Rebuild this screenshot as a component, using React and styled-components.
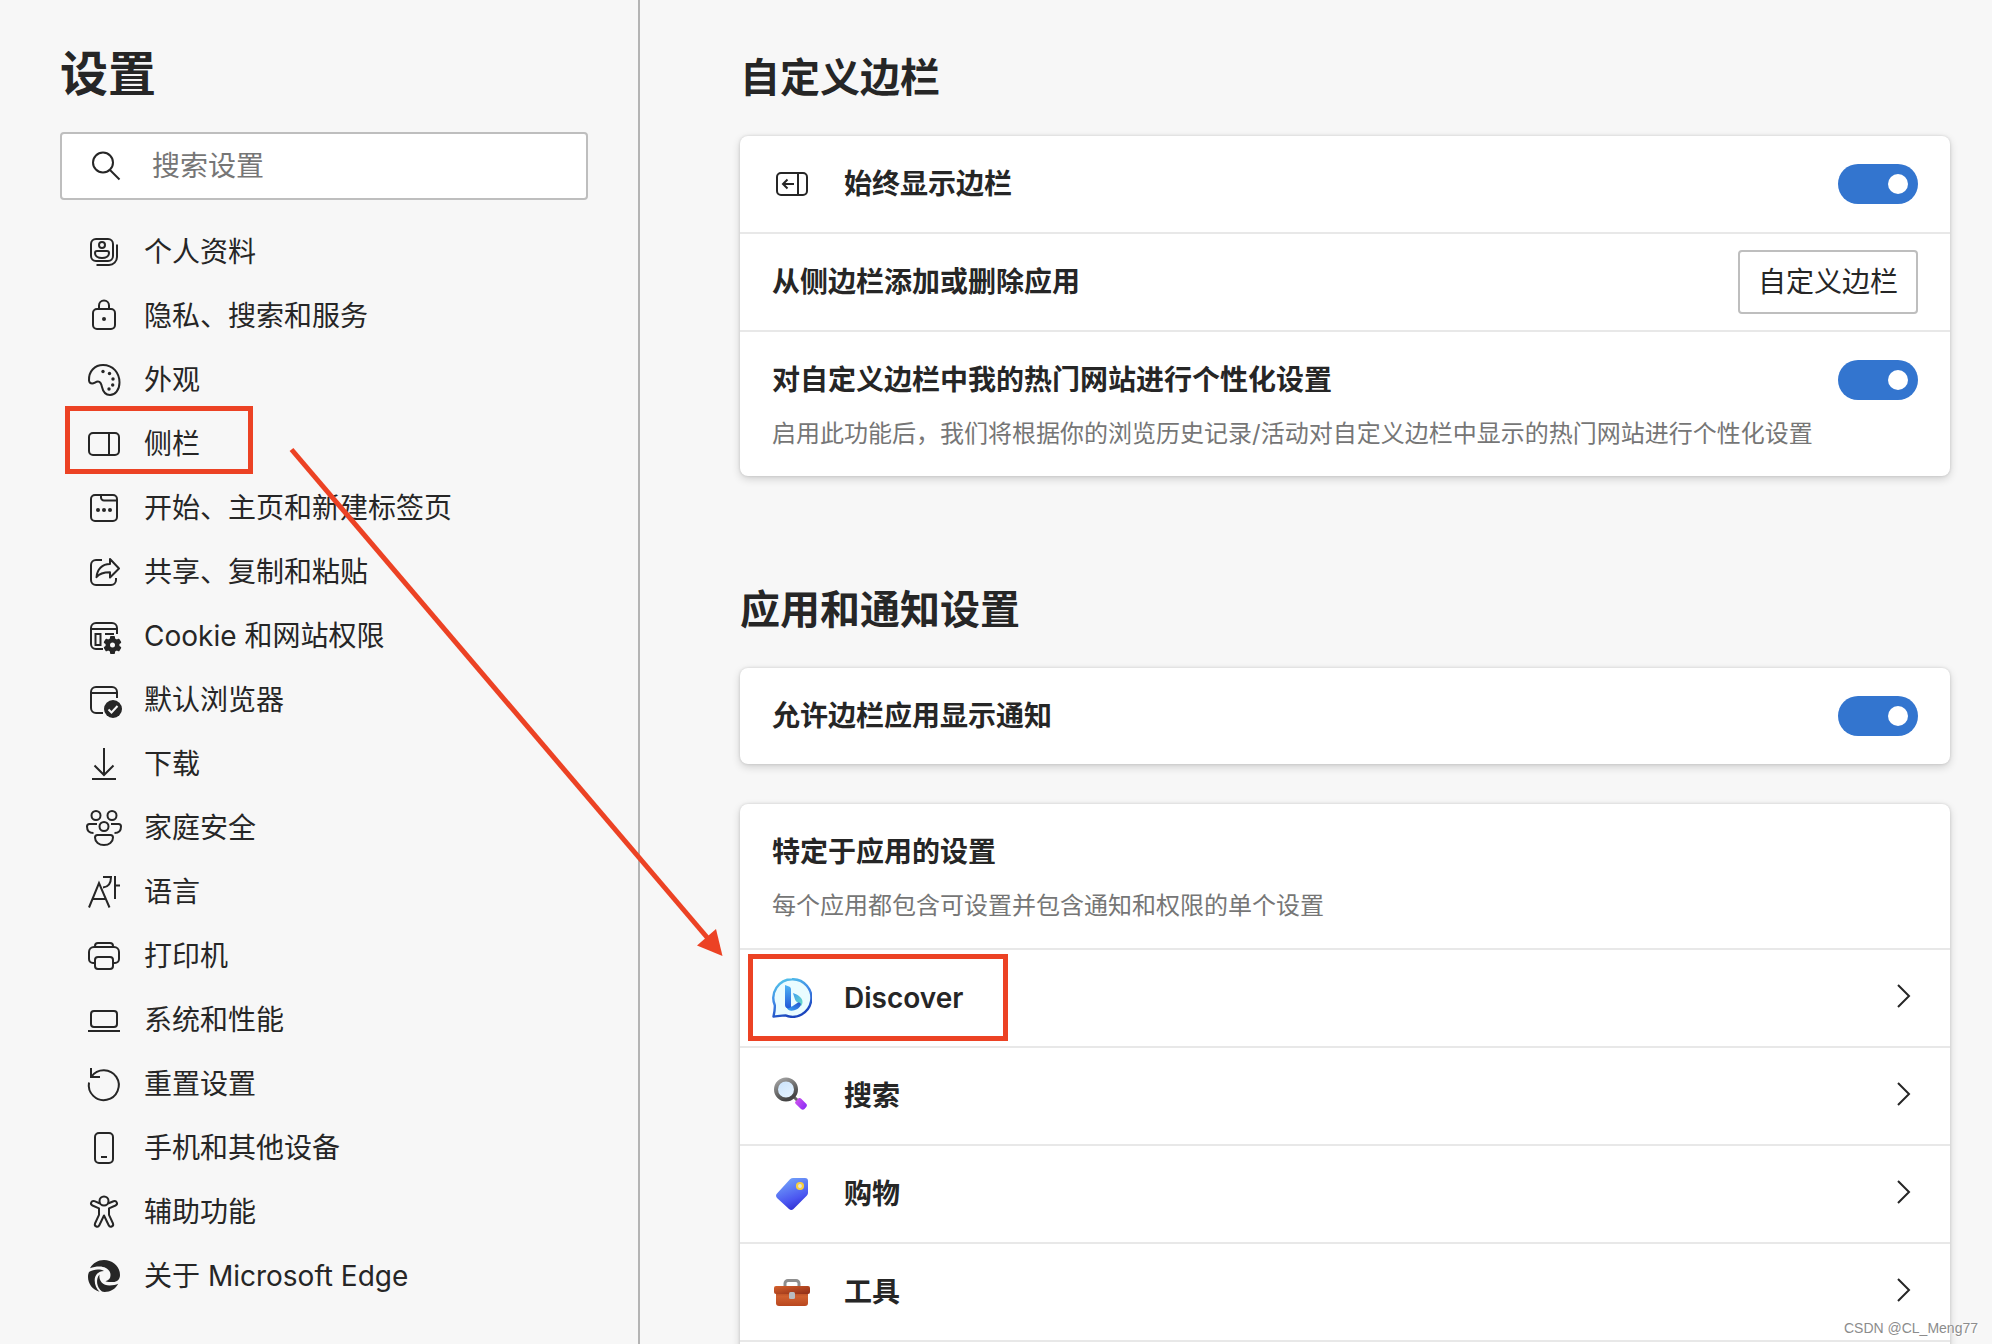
import React from "react";
import styled, { createGlobalStyle } from "styled-components";

const INK = "#262626";
const MARK = "#ec4224";

const GlobalStyle = createGlobalStyle`
  *, *::before, *::after { box-sizing: border-box; }
  body {
    margin: 0;
    background: #f7f7f7;
    color: ${INK};
    font-family: Inter, "Noto Sans CJK SC", sans-serif;
    font-size: 28px;
    line-height: 40px;
  }
  h1, h2, h3, p, ul { margin: 0; padding: 0; }
  ul { list-style: none; }
  a { color: inherit; text-decoration: none; }
`;

const Page = styled.div`
  position: relative;
  display: flex;
  height: 100vh;
  overflow: hidden;
`;

/* Sidebar */

const Sidebar = styled.aside`
  flex: 0 0 640px;
  min-width: 0;
  padding: 42px 50px 0 60px;
  border-right: 2px solid #b4b4b4;
`;

const Title = styled.h1`
  margin-bottom: 26px;
  font-size: 48px;
  line-height: 64px;
  font-weight: 700;
`;

const SearchBox = styled.label`
  display: flex;
  align-items: center;
  gap: 30px;
  height: 68px;
  padding: 0 28px;
  border: 2px solid #bebebe;
  border-radius: 4px;
  background: #fff;
`;

const SearchInput = styled.input`
  flex: 1;
  width: 100%;
  min-width: 0;
  padding: 0;
  border: 0;
  outline: 0;
  background: transparent;
  color: ${INK};
  font: inherit;
  &::placeholder { color: #767676; opacity: 1; }
`;

const NavList = styled.ul`
  margin-top: 20px;
`;

const NavLink = styled.a`
  position: relative;
  display: flex;
  align-items: center;
  gap: 20px;
  height: 64px;
  padding-left: 24px;
`;

const Icon = styled.svg`
  flex: none;
  width: ${(p) => p.$size || 40}px;
  height: ${(p) => p.$size || 40}px;
  fill: none;
  stroke: ${INK};
  stroke-width: 2;
`;

/* Content */

const Main = styled.main`
  flex: 1;
  min-width: 0;
  display: flex;
  flex-direction: column;
  padding: 50px 42px 0 100px;
`;

const SectionTitle = styled.h2`
  margin-bottom: 30px;
  font-size: 40px;
  line-height: 56px;
  font-weight: 600;

  * + & { margin-top: 106px; }
`;

const Card = styled.section`
  border-radius: ${(p) => (p.$fill ? "8px 8px 0 0" : "8px")};
  background: #fff;
  box-shadow: 0 3px 8px rgba(0, 0, 0, 0.16), 0 0 3px rgba(0, 0, 0, 0.14);
  flex: ${(p) => (p.$fill ? "1 0 auto" : "none")};

  & + & { margin-top: 40px; }
`;

const Row = styled.div`
  position: relative;
  display: flex;
  align-items: center;
  gap: 32px;
  min-height: 96px;
  padding: 0 32px;
  & + & { border-top: 2px solid #e8e8e8; min-height: 98px; }
`;

const TallRow = styled(Row)`
  align-items: flex-start;
  padding: 28px 32px 26px;
`;

const RowText = styled.div`
  flex: 1;
  min-width: 0;
`;

const RowTitle = styled.span`
  display: block;
  flex: 1;
  font-size: 28px;
  font-weight: 600;
`;

const Description = styled.p`
  margin-top: 18px;
  color: #767676;
  font-size: 24px;
  line-height: 32px;
  white-space: nowrap;
`;

const Switch = styled.input`
  appearance: none;
  flex: none;
  display: flex;
  align-items: center;
  justify-content: flex-end;
  width: 80px;
  height: 40px;
  margin: 0;
  padding: 0 10px;
  border-radius: 20px;
  background: #3375cf;
  cursor: pointer;

  &::before {
    content: "";
    width: 20px;
    height: 20px;
    border-radius: 50%;
    background: #fff;
  }
  &:not(:checked) {
    justify-content: flex-start;
    background: #8a8a8a;
  }
`;

const OutlineButton = styled.button`
  height: 64px;
  padding: 0 18px;
  border: 2px solid #bebebe;
  border-radius: 4px;
  background: #fff;
  color: ${INK};
  font: inherit;
  cursor: pointer;
`;

/* Annotations laid over the page */

const MarkBox = styled.span`
  position: absolute;
  left: ${(p) => p.$left}px;
  top: ${(p) => p.$top}px;
  width: ${(p) => p.$width}px;
  height: ${(p) => p.$height}px;
  border: 5px solid ${MARK};
  pointer-events: none;
`;

const Arrow = styled.svg`
  position: absolute;
  left: 280px;
  top: 440px;
  width: 450px;
  height: 520px;
  pointer-events: none;
`;

const Watermark = styled.div`
  position: absolute;
  right: 14px;
  bottom: 6px;
  color: #8c8c8c;
  font-family: "Liberation Sans", sans-serif;
  font-size: 14px;
  line-height: 20px;
  text-shadow: 1px 1px 0 #fff;
`;

const gearTeeth = [0, 60, 120, 180, 240, 300];

const icons = {
  profile: (
    <>
      <rect x="7" y="7" width="22" height="22" rx="5" />
      <circle cx="18" cy="13" r="3" />
      <path d="M13 19h10a2 2 0 0 1 2 2c0 3-3 5-7 5s-7-2-7-5a2 2 0 0 1 2-2z" />
      <path d="M33 12.500v12.500a8 8 0 0 1-8 8H12.500" />
    </>
  ),
  lock: (
    <>
      <rect x="9" y="13" width="22" height="20" rx="4" />
      <path d="M15 13V9.500a5 5 0 0 1 10 0V13" />
      <circle cx="20" cy="23" r="2" fill={INK} stroke="none" />
    </>
  ),
  palette: (
    <>
      <path d="M5 20.500C4.500 11 11 5 19 5c10 0 16.500 8 16.500 17.500C35.500 30 31 35 26 35c-4.500 0-7-3.500-8-8-.8-4-1.800-5.500-4-5.500-2.500 0-3.500 2-5.800 2C6.200 23.500 5.200 22.300 5 20.500z" />
      <g fill={INK} stroke="none">
        <circle cx="19" cy="11.500" r="1.700" />
        <circle cx="25.500" cy="13.500" r="1.700" />
        <circle cx="29" cy="19" r="1.700" />
        <circle cx="28.700" cy="25" r="1.700" />
        <circle cx="25" cy="29" r="1.700" />
      </g>
    </>
  ),
  sidebar: (
    <>
      <rect x="5" y="9" width="30" height="22" rx="4" />
      <path d="M25 9v22" />
    </>
  ),
  start: (
    <>
      <rect x="7" y="7" width="26" height="26" rx="4" />
      <path d="M17 7v2.500a3 3 0 0 0 3 3h13" />
      <g fill={INK} stroke="none">
        <circle cx="14" cy="22" r="2" />
        <circle cx="20" cy="22" r="2" />
        <circle cx="26" cy="22" r="2" />
      </g>
    </>
  ),
  share: (
    <>
      <path d="M18 8h-6a5 5 0 0 0-5 5v15a5 5 0 0 0 5 5h15a5 5 0 0 0 5-5v-2" />
      <path strokeLinejoin="round" d="M26 7l9 9.500-9 9v-5.300c-6 0-10.500 1-13.500 5C13 17.500 18 12 26 12z" />
    </>
  ),
  cookie: (
    <>
      <path d="M19 33h-7a5 5 0 0 1-5-5V12a5 5 0 0 1 5-5h16a5 5 0 0 1 5 5v6M7 13h26M21 18h9" />
      <path d="M11.500 18h5v11h-5z" />
      <g fill={INK} stroke="none">
        {gearTeeth.map((a) => (
          <rect key={a} x="26" y="20" width="5" height="6" rx="1" transform={`rotate(${a} 28.500 29)`} />
        ))}
        <path fillRule="evenodd" d="M28.500 22a7 7 0 1 0 0 14 7 7 0 0 0 0-14zm0 4.500a2.500 2.500 0 1 1 0 5 2.500 2.500 0 0 1 0-5z" />
      </g>
    </>
  ),
  browser: (
    <>
      <path d="M19 33h-7a5 5 0 0 1-5-5V12a5 5 0 0 1 5-5h16a5 5 0 0 1 5 5v6M7 13h26" />
      <circle cx="29" cy="29" r="9" fill={INK} stroke="none" />
      <path d="M24.500 29.500l3 3 6-6.500" stroke="#f7f7f7" />
    </>
  ),
  download: <path d="M20 4v27M10.500 21.500L20 31l9.500-9.500M8 35h24" />,
  family: (
    <>
      <circle cx="12" cy="7.500" r="4.500" />
      <circle cx="28" cy="7.500" r="4.500" />
      <circle cx="20" cy="18.500" r="4.500" />
      <path d="M13 16H5.500A2.500 2.500 0 0 0 3 18.500c0 4 2.500 6.500 6.500 6.500M27 16h7.500a2.500 2.500 0 0 1 2.500 2.500c0 4-2.500 6.500-6.500 6.500" />
      <path d="M13.500 27h13a2.500 2.500 0 0 1 2.500 2.500c0 4.500-4 7.500-9 7.500s-9-3-9-7.500a2.500 2.500 0 0 1 2.500-2.500z" />
    </>
  ),
  language: (
    <path d="M5 35.500L15 11l10.500 24.500M8.500 27h13.500M19 5h8c0 6-2.500 10-8 10.500M31 4v23M31 13.500h5" />
  ),
  printer: (
    <>
      <path d="M11 27H9a4 4 0 0 1-4-4v-7a5 5 0 0 1 5-5h20a5 5 0 0 1 5 5v7a4 4 0 0 1-4 4h-2" />
      <path d="M11 11v-1a3 3 0 0 1 3-3h12a3 3 0 0 1 3 3v1" />
      <rect x="11" y="21" width="18" height="12" rx="3" />
    </>
  ),
  laptop: (
    <>
      <rect x="7" y="11" width="26" height="16" rx="3" />
      <path d="M4 31h32" />
    </>
  ),
  reset: <path d="M5 18.500A15 15 0 1 0 7.500 12.500M7 4v9h9" />,
  phone: (
    <>
      <rect x="11" y="5" width="18" height="30" rx="4" />
      <path d="M17 29h6" />
    </>
  ),
  accessibility: (
    <>
      <circle cx="20" cy="9" r="4.500" />
      <path
        strokeLinejoin="round"
        d="M16 11.500L10.500 9.200c-3-1.200-5 2.800-2 4.300l6.500 2.800v6.500L11 31.500c-1 3 3 4.500 4.300 1.800L20 23.500l4.700 9.800c1.300 2.700 5.300 1.200 4.300-1.800l-4-8.700v-6.500l6.500-2.800c3-1.500 1-5.500-2-4.300L24 11.500"
      />
    </>
  ),
  edge: (
    <g fill={INK} stroke="none">
      <path d="M6 12.200C9 7 14 4 20 4c9 0 16 6.500 16 15 0 4.500-3 7-7 7-3 0-5.500 0-7.500-.8 3.500-.7 5-3.200 5-6.200 0-5-5-8.500-11-8.500-3.500 0-6.500.7-9.500 1.700z" />
      <path d="M5 16c4-2.500 10.500-3.500 15-1-6 .2-9.300 4-9.300 9.500 0 4.500 2 8.500 4.800 11.200C8.500 34 4 27.500 4 21c0-2 .3-3.500 1-5z" />
      <path d="M15.500 18.500c-1 6.500 3.500 11 10 11 3.500 0 6.500-.7 8.700-1.700C31.500 33 26.500 36 20.500 36c-1 0-2-.2-2.500-.4-5.500-4.100-6.500-12.600-2.500-17.100z" />
    </g>
  ),
};

const navItems = [
  ["profile", "个人资料"],
  ["lock", "隐私、搜索和服务"],
  ["palette", "外观"],
  ["sidebar", "侧栏"],
  ["start", "开始、主页和新建标签页"],
  ["share", "共享、复制和粘贴"],
  ["cookie", "Cookie 和网站权限"],
  ["browser", "默认浏览器"],
  ["download", "下载"],
  ["family", "家庭安全"],
  ["language", "语言"],
  ["printer", "打印机"],
  ["laptop", "系统和性能"],
  ["reset", "重置设置"],
  ["phone", "手机和其他设备"],
  ["accessibility", "辅助功能"],
  ["edge", "关于 Microsoft Edge"],
];

const appIcons = {
  discover: (
    <>
      <defs>
        <linearGradient id="ring" x1="0" y1="0" x2="0.400" y2="1">
          <stop offset="0" stopColor="#55cdea" />
          <stop offset="0.550" stopColor="#3f86e6" />
          <stop offset="1" stopColor="#1b45bd" />
        </linearGradient>
        <linearGradient id="stem" x1="0" y1="0" x2="0" y2="1">
          <stop offset="0" stopColor="#4fb4f5" />
          <stop offset="1" stopColor="#2158d8" />
        </linearGradient>
        <linearGradient id="bowl" x1="0" y1="1" x2="1" y2="0">
          <stop offset="0" stopColor="#3aa5f2" />
          <stop offset="1" stopColor="#2450cf" />
        </linearGradient>
        <linearGradient id="leaf" x1="0" y1="0" x2="1" y2="1">
          <stop offset="0" stopColor="#3f9df0" />
          <stop offset="1" stopColor="#6be0c5" />
        </linearGradient>
      </defs>
      <path d="M20 1.200a18.800 18.800 0 1 1-6.500 36.200c-4 .2-8 .8-12 1.200C2.500 34 3 30 2.800 27.200A18.800 18.800 0 0 1 20 1.200z" fill="#eafcff" stroke="url(#ring)" strokeWidth="2.400" strokeLinejoin="round" />
      <g stroke="none">
        <path d="M21 15c5 1.500 10 5 9.500 9.500-.2 2-1 3-1.500 3.500-.5-2-1.500-2.700-4-4-2-1-2.500-4.500-4-9z" fill="url(#leaf)" />
        <path d="M14.500 29l5.500-.5 6-4c2-.5 3.500 1 2.700 3-1.500 3-5.700 5.300-9.200 5.200-2.500 0-4.500-1.500-5-3.700z" fill="url(#bowl)" />
        <path d="M13 7l4 1.500c1.500.5 2 1.500 2 3V29c-3.500 2.500-6 .8-6-2z" fill="url(#stem)" />
      </g>
    </>
  ),
  search: (
    <>
      <defs>
        <linearGradient id="rim" x1="0" y1="0" x2="0.500" y2="1">
          <stop offset="0" stopColor="#a5a5a5" />
          <stop offset="1" stopColor="#454545" />
        </linearGradient>
        <linearGradient id="glass" x1="0" y1="0" x2="0.600" y2="1">
          <stop offset="0" stopColor="#c8e2fb" />
          <stop offset="1" stopColor="#e4f2ff" />
        </linearGradient>
        <linearGradient id="grip" x1="0" y1="0" x2="1" y2="0.600">
          <stop offset="0" stopColor="#d657ec" />
          <stop offset="1" stopColor="#9030f5" />
        </linearGradient>
      </defs>
      <path d="M22 21l4 4" stroke="#666" strokeWidth="3" />
      <circle cx="14" cy="13.500" r="10" fill="url(#glass)" stroke="url(#rim)" strokeWidth="4" />
      <path d="M23.500 25.500l3-3.200c1-.6 2-.3 2.700.4l5 5c1 1 .9 2.200 0 3.200l-1.700 2c-1 1-2.500 1-3.500 0l-5.200-5c-.9-.9-.9-1.700-.3-2.400z" fill="url(#grip)" stroke="none" />
    </>
  ),
  shopping: (
    <>
      <defs>
        <linearGradient id="tag" x1="0.200" y1="0" x2="0.600" y2="1">
          <stop offset="0" stopColor="#75a8fa" />
          <stop offset="0.700" stopColor="#4a55f0" />
          <stop offset="1" stopColor="#2f2fd0" />
        </linearGradient>
      </defs>
      <path d="M18 5.200c1-.8 2-1.200 3.200-1.200H33a3 3 0 0 1 3 3v11.500c0 1.300-.4 2.300-1.300 3.200L21.500 35c-1.500 1.300-3 1.300-4.500 0L5 24c-1.300-1.400-1.300-3 0-4.400z" fill="url(#tag)" stroke="none" />
      <circle cx="28" cy="12" r="3" fill="#dfe3ea" stroke="#f7cf3d" strokeWidth="2.200" />
    </>
  ),
  tools: (
    <>
      <defs>
        <linearGradient id="lid" x1="0" y1="0" x2="1" y2="1">
          <stop offset="0" stopColor="#d5612c" />
          <stop offset="1" stopColor="#8f2c16" />
        </linearGradient>
        <linearGradient id="case" x1="0" y1="0" x2="0" y2="1">
          <stop offset="0" stopColor="#a83f1c" />
          <stop offset="0.400" stopColor="#d0602f" />
          <stop offset="1" stopColor="#b9471f" />
        </linearGradient>
      </defs>
      <path d="M13 15v-3.500a3 3 0 0 1 3-3h8a3 3 0 0 1 3 3V15" stroke="#8e8e8e" strokeWidth="3" />
      <rect x="4" y="18" width="32" height="16" rx="3" fill="url(#case)" stroke="none" />
      <path d="M4 14h32a2 2 0 0 1 2 2v4a2 2 0 0 1-2 2H4a2 2 0 0 1-2-2v-4a2 2 0 0 1 2-2z" fill="url(#lid)" stroke="none" />
      <rect x="17" y="20" width="6" height="7" rx="1.500" fill="#b9bcc0" stroke="none" />
    </>
  ),
};

const apps = [
  ["discover", "Discover"],
  ["search", "搜索"],
  ["shopping", "购物"],
  ["tools", "工具"],
];

const Glyph = ({ children, size = 40 }) => (
  <Icon $size={size} viewBox={`0 0 ${size} ${size}`} aria-hidden="true">
    {children}
  </Icon>
);

export default function App() {
  return (
    <Page lang="zh-CN">
      <GlobalStyle />
      <Sidebar>
        <Title>设置</Title>
        <SearchBox>
          <Glyph size={32}>
            <circle cx="13" cy="12.500" r="10" />
            <path d="M20 20l9.500 9.500" />
          </Glyph>
          <SearchInput type="search" placeholder="搜索设置" aria-label="搜索设置" />
        </SearchBox>
        <nav>
          <NavList>
            {navItems.map(([icon, label]) => (
              <li key={icon}>
                <NavLink href={`#${icon}`} aria-current={icon === "sidebar" ? "page" : undefined}>
                  <Glyph>{icons[icon]}</Glyph>
                  {label}
                  {icon === "sidebar" && <MarkBox $left={5} $top={-6} $width={188} $height={68} />}
                </NavLink>
              </li>
            ))}
          </NavList>
        </nav>
      </Sidebar>

      <Main>
        <SectionTitle>自定义边栏</SectionTitle>
        <Card>
          <Row>
            <Glyph>
              <rect x="5" y="9" width="30" height="22" rx="4" />
              <path d="M26 9v22M22 20H11.500M15.500 15.500L11 20l4.500 4.500" />
            </Glyph>
            <RowTitle as="label" htmlFor="always-show">始终显示边栏</RowTitle>
            <Switch id="always-show" type="checkbox" defaultChecked />
          </Row>
          <Row>
            <RowTitle>从侧边栏添加或删除应用</RowTitle>
            <OutlineButton type="button">自定义边栏</OutlineButton>
          </Row>
          <TallRow>
            <RowText>
              <RowTitle as="label" htmlFor="personalize">对自定义边栏中我的热门网站进行个性化设置</RowTitle>
              <Description>
                启用此功能后，我们将根据你的浏览历史记录/活动对自定义边栏中显示的热门网站进行个性化设置
              </Description>
            </RowText>
            <Switch id="personalize" type="checkbox" defaultChecked />
          </TallRow>
        </Card>

        <SectionTitle>应用和通知设置</SectionTitle>
        <Card>
          <Row>
            <RowTitle as="label" htmlFor="notifications">允许边栏应用显示通知</RowTitle>
            <Switch id="notifications" type="checkbox" defaultChecked />
          </Row>
        </Card>
        <Card $fill>
          <TallRow>
            <RowText>
              <RowTitle as="h3">特定于应用的设置</RowTitle>
              <Description>每个应用都包含可设置并包含通知和权限的单个设置</Description>
            </RowText>
          </TallRow>
          {apps.map(([id, name]) => (
            <Row as="a" href={`#app-${id}`} key={id}>
              <Glyph>{appIcons[id]}</Glyph>
              <RowTitle>{name}</RowTitle>
              <Glyph size={32}>
                <path d="M12 3l11 11-11 11" />
              </Glyph>
              {id === "discover" && <MarkBox $left={8} $top={4} $width={260} $height={87} />}
            </Row>
          ))}
          <Row />
        </Card>
      </Main>

      <Arrow viewBox="0 0 450 520" aria-hidden="true">
        <path d="M11.500 9.500L431 502" stroke={MARK} strokeWidth="5" />
        <path d="M442.500 516l-25.500-10.500L436 489z" fill={MARK} />
      </Arrow>
      <Watermark>CSDN @CL_Meng77</Watermark>
    </Page>
  );
}
